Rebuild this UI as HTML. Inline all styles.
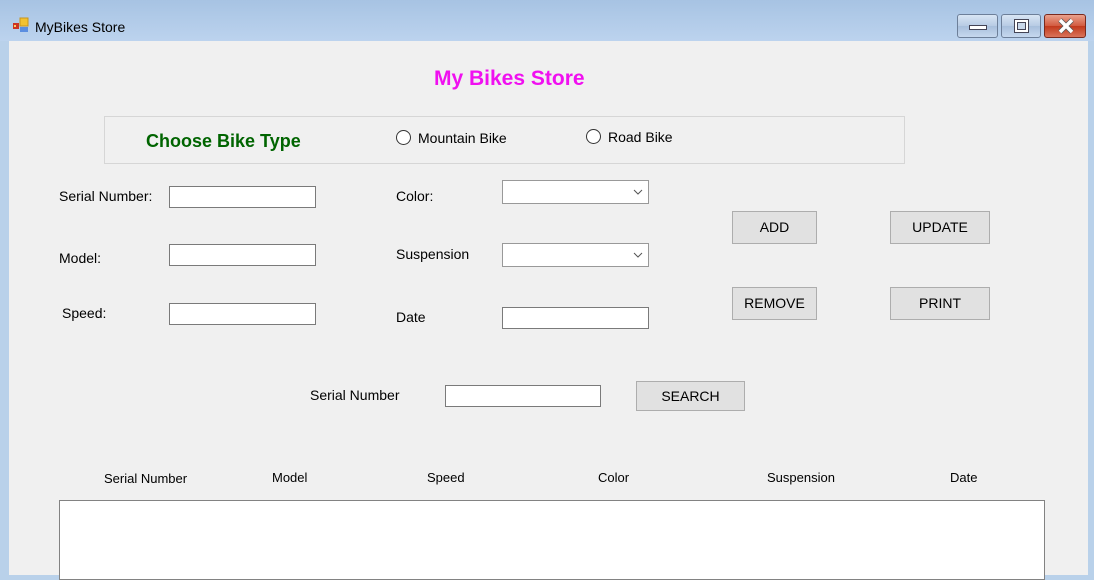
<!DOCTYPE html>
<html><head><style>
*{margin:0;padding:0;box-sizing:border-box}
body{width:1094px;height:575px;overflow:hidden;background:#b9d1ea;font-family:"Liberation Sans",Arial,sans-serif;font-size:14px;color:#000;position:relative}
.a{position:absolute;white-space:nowrap}
.title{left:0;top:0;width:1094px;height:41px;background:linear-gradient(#a7c3e3,#bcd3ee)}
.client{left:9px;top:41px;width:1079px;height:534px;background:#f0f0f0}
.tb{position:absolute;background:#fff;border:1px solid #7a7a7a}
.btn{position:absolute;background:#e1e1e1;border:1px solid #adadad;text-align:center;font-size:14px}
.rad{position:absolute;width:15px;height:15px;border:1px solid #333;border-radius:50%;background:#fff}
.wb{position:absolute;top:14px;height:24px;border:1px solid #6d7f99;border-radius:3px;background:linear-gradient(#d8e5f4,#b7cbe4 50%,#a8bfdc 51%,#c6d8ee)}
</style></head><body>
<div class="a title"></div>
<svg class="a" style="left:12px;top:17px" width="18" height="17"><rect x="1" y="6" width="6" height="6" fill="#c32"/><rect x="2" y="8" width="2" height="2" fill="#fc6"/><rect x="8" y="1" width="8" height="8" fill="#f2c231" stroke="#c9951a"/><rect x="8" y="10" width="8" height="5" fill="#5b8ee0"/></svg>
<div class="a" style="left:35px;top:19px;font-size:14px;color:#000">MyBikes Store</div>
<div class="wb" style="left:957px;width:41px"><div style="position:absolute;left:11px;top:10px;width:18px;height:5px;background:#fff;border:1px solid #445"></div></div>
<div class="wb" style="left:1001px;width:40px"><div style="position:absolute;left:12px;top:4px;width:15px;height:14px;border:1px solid #445;background:#fff"><div style="margin:2px;width:9px;height:8px;border:1px solid #445;background:#c9d8ea"></div></div></div>
<div class="wb" style="left:1044px;width:42px;border-color:#7a2a1e;background:linear-gradient(#e9a18d,#d25a3f 50%,#c2391c 51%,#d9735a)"><svg style="position:absolute;left:12px;top:3px" width="18" height="16"><path d="M3 2L15 14M15 2L3 14" stroke="#555" stroke-width="5"/><path d="M3 2L15 14M15 2L3 14" stroke="#fff" stroke-width="3.5"/></svg></div>
<div class="a client"></div>
<div class="a" style="left:434px;top:67px;font-size:21px;font-weight:bold;color:#f010f0">My Bikes Store</div>
<div class="a" style="left:104px;top:116px;width:801px;height:48px;border:1px solid #d6d6d6"></div>
<div class="a" style="left:146px;top:131px;font-size:18px;font-weight:bold;color:#006400">Choose Bike Type</div>
<div class="rad" style="left:396px;top:130px"></div>
<div class="a" style="left:418px;top:130px">Mountain Bike</div>
<div class="rad" style="left:586px;top:129px"></div>
<div class="a" style="left:608px;top:129px">Road Bike</div>
<div class="a" style="left:59px;top:188px">Serial Number:</div>
<div class="a" style="left:59px;top:250px">Model:</div>
<div class="a" style="left:62px;top:305px">Speed:</div>
<div class="tb" style="left:169px;top:186px;width:147px;height:22px"></div>
<div class="tb" style="left:169px;top:244px;width:147px;height:22px"></div>
<div class="tb" style="left:169px;top:303px;width:147px;height:22px"></div>
<div class="a" style="left:396px;top:188px">Color:</div>
<div class="a" style="left:396px;top:246px">Suspension</div>
<div class="a" style="left:396px;top:309px">Date</div>
<div class="tb" style="left:502px;top:180px;width:147px;height:24px;border-color:#999"><svg style="position:absolute;right:5px;top:8px" width="10" height="6"><path d="M1 1L5 5L9 1" stroke="#555" fill="none"/></svg></div>
<div class="tb" style="left:502px;top:243px;width:147px;height:24px;border-color:#999"><svg style="position:absolute;right:5px;top:8px" width="10" height="6"><path d="M1 1L5 5L9 1" stroke="#555" fill="none"/></svg></div>
<div class="tb" style="left:502px;top:307px;width:147px;height:22px"></div>
<div class="btn" style="left:732px;top:211px;width:85px;height:33px;line-height:31px">ADD</div>
<div class="btn" style="left:890px;top:211px;width:100px;height:33px;line-height:31px">UPDATE</div>
<div class="btn" style="left:732px;top:287px;width:85px;height:33px;line-height:31px">REMOVE</div>
<div class="btn" style="left:890px;top:287px;width:100px;height:33px;line-height:31px">PRINT</div>
<div class="a" style="left:310px;top:387px">Serial Number</div>
<div class="tb" style="left:445px;top:385px;width:156px;height:22px"></div>
<div class="btn" style="left:636px;top:381px;width:109px;height:30px;line-height:28px">SEARCH</div>
<div class="a" style="left:104px;top:471px;font-size:13px">Serial Number</div>
<div class="a" style="left:272px;top:470px;font-size:13px">Model</div>
<div class="a" style="left:427px;top:470px;font-size:13px">Speed</div>
<div class="a" style="left:598px;top:470px;font-size:13px">Color</div>
<div class="a" style="left:767px;top:470px;font-size:13px">Suspension</div>
<div class="a" style="left:950px;top:470px;font-size:13px">Date</div>
<div class="tb" style="left:59px;top:500px;width:986px;height:80px;border-color:#828282"></div>
</body></html>
